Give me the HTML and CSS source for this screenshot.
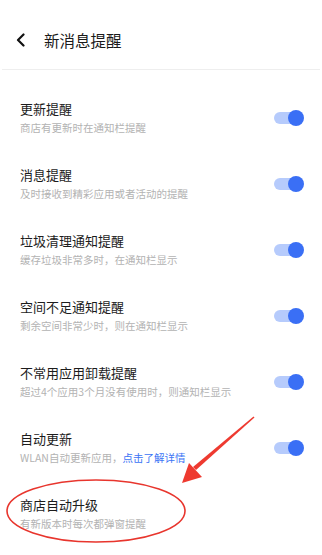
FILE: index.html
```html
<!DOCTYPE html>
<html lang="zh">
<head>
<meta charset="utf-8">
<link rel="stylesheet" href="styles.css">
</head>
<body>
<div class="page">
  <header class="header">
    <svg class="back" width="12" height="14" viewBox="0 0 12 14"><path d="M8.5 1.5 L3 7 L8.5 12.5" fill="none" stroke="#111" stroke-width="2.2" stroke-linecap="round" stroke-linejoin="round"/></svg>
    <span class="header-title">新消息提醒</span>
  </header>
  <ul class="list">
    <li class="row">
      <div class="texts"><div class="title">更新提醒</div><div class="sub">商店有更新时在通知栏提醒</div></div>
      <span class="toggle"><span class="knob"></span></span>
    </li>
    <li class="row">
      <div class="texts"><div class="title">消息提醒</div><div class="sub">及时接收到精彩应用或者活动的提醒</div></div>
      <span class="toggle"><span class="knob"></span></span>
    </li>
    <li class="row">
      <div class="texts"><div class="title">垃圾清理通知提醒</div><div class="sub">缓存垃圾非常多时，在通知栏显示</div></div>
      <span class="toggle"><span class="knob"></span></span>
    </li>
    <li class="row">
      <div class="texts"><div class="title">空间不足通知提醒</div><div class="sub">剩余空间非常少时，则在通知栏显示</div></div>
      <span class="toggle"><span class="knob"></span></span>
    </li>
    <li class="row">
      <div class="texts"><div class="title">不常用应用卸载提醒</div><div class="sub">超过4个应用3个月没有使用时，则通知栏显示</div></div>
      <span class="toggle"><span class="knob"></span></span>
    </li>
    <li class="row">
      <div class="texts"><div class="title">自动更新</div><div class="sub">WLAN自动更新应用，<span class="link">点击了解详情</span></div></div>
      <span class="toggle"><span class="knob"></span></span>
    </li>
    <li class="row">
      <div class="texts"><div class="title">商店自动升级</div><div class="sub">有新版本时每次都弹窗提醒</div></div>
    </li>
  </ul>
  <svg class="annot" width="322" height="555" viewBox="0 0 322 555">
    <ellipse cx="96" cy="511" rx="89" ry="31" fill="none" stroke="#e8352d" stroke-width="1.6"/>
    <polygon points="253.5,416.5 254.5,417.5 196,470 193,467" fill="#ee3a30"/>
    <polygon points="182,483 189,463 202,477" fill="#ee3a30"/>
  </svg>
</div>
</body>
</html>
```
FILE: styles.css
```css
* { box-sizing: border-box; }
html, body { margin: 0; padding: 0; background: #fff; }
body {
  font-family: "Noto Sans CJK SC", "Noto Sans", sans-serif;
  color: #1c1c1c;
}
.page {
  position: relative;
  width: 322px;
  height: 555px;
  overflow: hidden;
}
.header {
  height: 70px;
  display: flex;
  align-items: center;
  margin: 0 2px;
  padding: 11px 0 0 13px;
  border-bottom: 1px solid #eeeeee;
}
.back { display: block; margin-right: 17px; }
.header-title {
  font-size: 15.5px;
  line-height: 20px;
  color: #1a1a1a;
}
.list {
  list-style: none;
  margin: 0;
  padding: 15px 0 0 0;
}
.row {
  height: 66px;
  padding: 14px 18px 14px 20px;
  display: flex;
  align-items: center;
  justify-content: space-between;
}
.texts { display: flex; flex-direction: column; }
.title {
  font-size: 13px;
  line-height: 20px;
  color: #1c1c1c;
}
.sub {
  font-size: 10.5px;
  line-height: 18px;
  color: #b3b3b3;
}
.link { color: #3b74f5; }
.toggle {
  position: relative;
  width: 30px;
  height: 16px;
  display: flex;
  align-items: center;
}
.toggle::before {
  content: "";
  display: block;
  width: 28px;
  height: 12px;
  border-radius: 6px;
  background: #b6cbfc;
}
.knob {
  position: absolute;
  right: 0;
  top: 0;
  width: 16px;
  height: 16px;
  border-radius: 50%;
  background: #3a6ff5;
}
.annot {
  position: absolute;
  left: 0;
  top: 0;
  pointer-events: none;
}
```
